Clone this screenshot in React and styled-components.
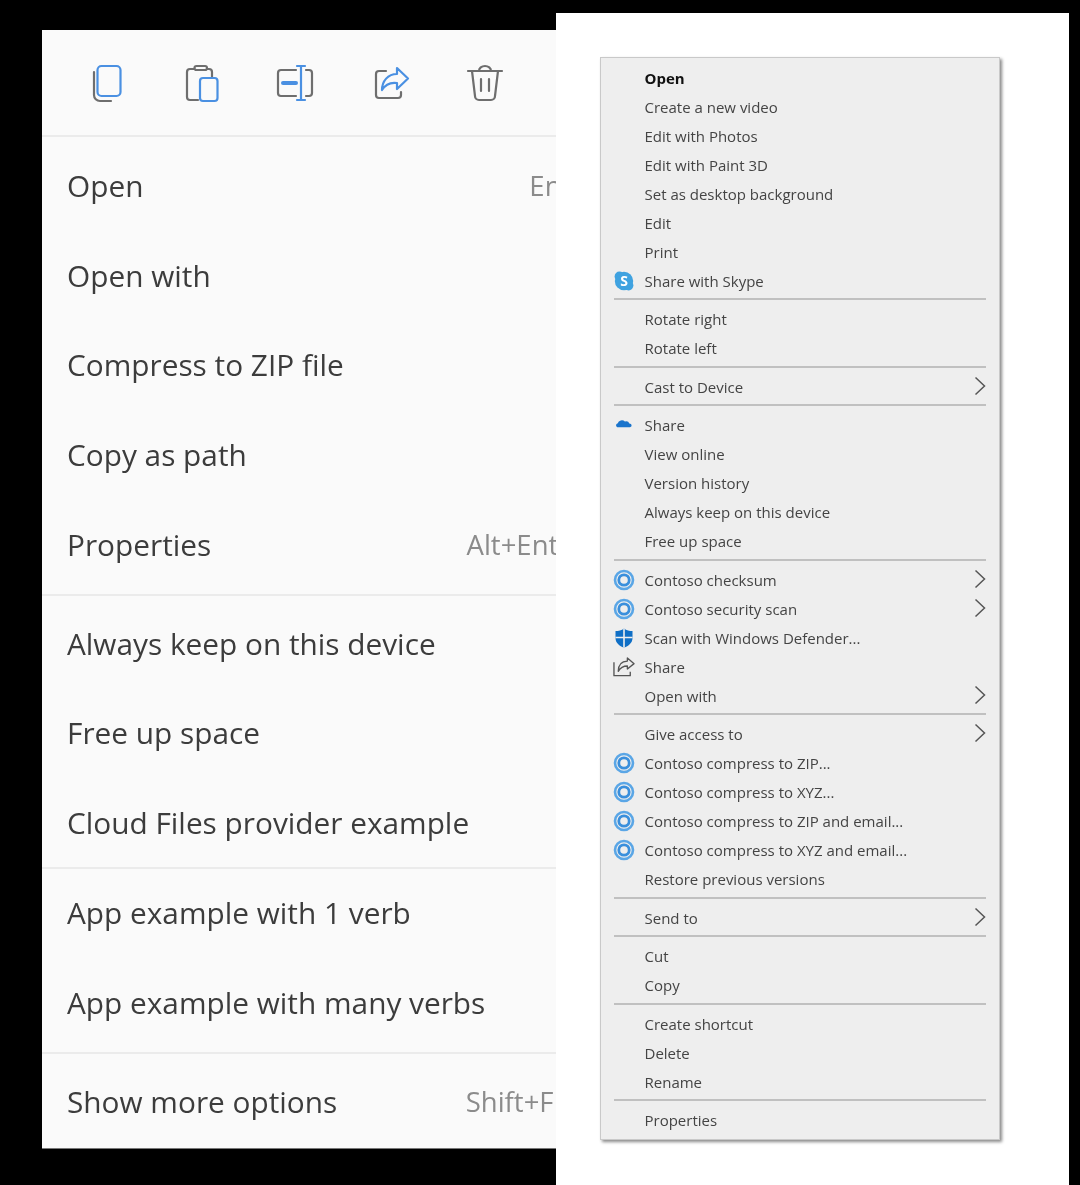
import React from "react";
import styled, { createGlobalStyle } from "styled-components";

const GlobalStyle = createGlobalStyle`
html, body {
	margin: 0;
	height: 100%;
	background: #000;
	overflow: hidden;
}
`;

const Page = styled.div`
display: flex;
align-items: flex-start;
width: 1080px;
height: 1185px;
font-family: "Open Sans", "Noto Sans", sans-serif;
`;

// left half: the new short menu, cut off on its right side
const LeftSide = styled.div`
width: 556px;
box-sizing: border-box;
padding: 30px 0 0 42px;
flex-shrink: 0;
`;

const ShortMenu = styled.div`
width: 514px;
overflow: hidden;
background: #fafafa;
border-bottom: 1px solid #777;
padding-bottom: 7px;
filter: blur(0.5px);
`;

const ShortInner = styled.div`
width: 543px;
`;

const Toolbar = styled.div`
display: flex;
height: 105px;
align-items: center;
padding-left: 18px;
`;

const ToolButton = styled.div`
width: 94.5px;
display: flex;
justify-content: center;
`;

const ShortLine = styled.div`
height: 2px;
background: #ebebeb;
margin: ${(p) => p.$top}px 0 ${(p) => p.$bottom}px;
`;

const ShortRow = styled.div`
display: flex;
align-items: center;
justify-content: space-between;
height: 80px;
padding-left: 25px;
margin-bottom: ${(p) => (p.$last ? 0 : 9.7)}px;
`;

const ShortLabel = styled.span`
font-size: 29.8px;
color: #3c3c3c;
`;

const ShortKey = styled.span`
font-size: 27.5px;
color: #8b8b8b;
margin-right: ${(p) => p.$nudge || 0}px;
`;

// right half: the classic long menu on a white sheet
const Sheet = styled.div`
width: 513px;
height: 1172px;
margin-top: 13px;
background: #fff;
box-sizing: border-box;
padding: 44px 0 0 44px;
flex-shrink: 0;
`;

const LongMenu = styled.div`
width: 400px;
height: 1083px;
box-sizing: border-box;
padding: 5px 13px 0 13px;
background: #eeeeee;
border: 1px solid #c9c9c9;
box-shadow: 2px 2px 3px #8a8a8a;
filter: blur(0.4px);
`;

const LongRow = styled.div`
display: flex;
align-items: center;
height: 29px;
`;

const IconCell = styled.div`
width: 31px;
height: 29px;
display: flex;
align-items: center;
flex-shrink: 0;
margin-left: -1px;
margin-right: 0.5px;
`;

const LongLabel = styled.span`
flex: 1;
font-size: 15px;
color: ${(p) => (p.$bold ? "#111" : "#444")};
font-weight: ${(p) => (p.$bold ? 700 : 400)};
white-space: nowrap;
`;

const Chevron = styled.svg`
width: 12px;
height: 20px;
margin-bottom: 2px;
`;

const LongLine = styled.div`
height: 2px;
background: #c0c0c0;
margin: 3px 0 4.55px;
`;

const BLUE = "#4a90e2";
const GRAY = "#6e6e6e";

const ToolIcon = ({ children }) => (
	<svg width="40" height="40" viewBox="0 0 40 40" fill="none" strokeWidth="2.2" strokeLinecap="round" strokeLinejoin="round">
		{children}
	</svg>
);

const tools = [
	<ToolIcon>
		<path d="M7 9V32a6 6 0 0 0 6 6H24" stroke={GRAY} />
		<rect x="10.5" y="3" width="23" height="30" rx="4" stroke={BLUE} />
	</ToolIcon>,
	<ToolIcon>
		<path d="M12 6H8a3 3 0 0 0-3 3V34a3 3 0 0 0 3 3H16M25 6h2a3 3 0 0 1 3 3v5" stroke={GRAY} />
		<rect x="12.5" y="3" width="12.5" height="4" rx="2" stroke={GRAY} />
		<rect x="18" y="15" width="17.5" height="23" rx="3" stroke={BLUE} />
	</ToolIcon>,
	<ToolIcon>
		<path d="M20 7H5a3 3 0 0 0-3 3V30a3 3 0 0 0 3 3H20M30 7h3a3 3 0 0 1 3 3V30a3 3 0 0 1-3 3H30" stroke={GRAY} />
		<path d="M25 3V37M21 3H29M21 37H29" stroke={BLUE} />
		<path d="M7 20H20" stroke={BLUE} strokeWidth="4" />
	</ToolIcon>,
	<ToolIcon>
		<path d="M15 8H8a3 3 0 0 0-3 3V32a3 3 0 0 0 3 3H27a3 3 0 0 0 3-3V29" stroke={GRAY} />
		<path d="M26 5L37 15.5L26 26V20C19 19 14 22 11 27C11 18 17 11 26 11Z" stroke={BLUE} />
	</ToolIcon>,
	<ToolIcon>
		<path d="M3 8H37M7 8L10 33a4 4 0 0 0 4 4H26a4 4 0 0 0 4-4L33 8M14 8a6 5 0 0 1 12 0M16 16V28M24 16V28" stroke={GRAY} />
	</ToolIcon>,
];

const shortGroups = [
	[["Open", "Enter", -13], ["Open with"], ["Compress to ZIP file"], ["Copy as path"], ["Properties", "Alt+Enter", 0]],
	[["Always keep on this device"], ["Free up space"], ["Cloud Files provider example"]],
	[["App example with 1 verb"], ["App example with many verbs"]],
	[["Show more options", "Shift+F10", 0]],
];

// line gaps worked out from the reference, they differ per group
const shortLineGaps = [
	[0, 8.5],
	[9.5, 7.5],
	[4.5, 3.5],
	[9.5, 7.5],
];

const Skype = () => (
	<svg width="22" height="22" viewBox="0 0 22 22">
		<circle cx="11" cy="11" r="9.2" fill="#3fa2e0" />
		<circle cx="6.4" cy="6.4" r="4.8" fill="#3fa2e0" />
		<circle cx="15.6" cy="15.6" r="4.8" fill="#3fa2e0" />
		<text x="11" y="15.8" textAnchor="middle" fontSize="14" fontWeight="700" fill="#fff" fontFamily="Open Sans, sans-serif">S</text>
	</svg>
);

const Contoso = () => (
	<svg width="22" height="22" viewBox="0 0 22 22" fill="none">
		<circle cx="11" cy="11" r="9" stroke="#5aa6e6" strokeWidth="2.6" />
		<circle cx="11" cy="11" r="5.2" stroke="#3a8fdc" strokeWidth="2.8" />
	</svg>
);

const Cloud = () => (
	<svg width="22" height="22" viewBox="0 0 22 22">
		<path d="M3 15.5a3 3 0 0 1 .6-5.4A5 5 0 0 1 12 7.8a4 4 0 0 1 5.2 2.6A2.6 2.6 0 0 1 18 15.5Z" fill="#1a74cc" transform="translate(1.7 1.6) scale(.85 .75)" />
	</svg>
);

const Shield = () => (
	<svg width="22" height="22" viewBox="0 0 22 22">
		<path d="M11 1.5C8.5 3.4 5.5 4 2.5 4V11c0 5 4 8 8.5 9.8C15.5 19 19.5 16 19.5 11V4C16.5 4 13.5 3.4 11 1.5Z" fill="#0f6fc6" />
		<path d="M11 1.5V20.8M2.5 10.5H19.5" stroke="#eee" strokeWidth="1.6" />
	</svg>
);

const ShareGlyph = () => (
	<svg width="23" height="22" viewBox="0 0 24 22" fill="none" stroke="#555" strokeWidth="1.4" strokeLinejoin="round">
		<path d="M1 6V20H18V16" />
		<path d="M15 1.5L22 7.5L15 13V10C10 10 7.5 12 5.5 15.5C5.5 9 9 5 15 4.8Z" />
	</svg>
);

const glyphs = { skype: <Skype />, contoso: <Contoso />, cloud: <Cloud />, shield: <Shield />, share: <ShareGlyph /> };

const longGroups = [
	[
		{ name: "Open", bold: true },
		{ name: "Create a new video" },
		{ name: "Edit with Photos" },
		{ name: "Edit with Paint 3D" },
		{ name: "Set as desktop background" },
		{ name: "Edit" },
		{ name: "Print" },
		{ name: "Share with Skype", icon: "skype" },
	],
	[{ name: "Rotate right" }, { name: "Rotate left" }],
	[{ name: "Cast to Device", more: true }],
	[
		{ name: "Share", icon: "cloud" },
		{ name: "View online" },
		{ name: "Version history" },
		{ name: "Always keep on this device" },
		{ name: "Free up space" },
	],
	[
		{ name: "Contoso checksum", icon: "contoso", more: true },
		{ name: "Contoso security scan", icon: "contoso", more: true },
		{ name: "Scan with Windows Defender...", icon: "shield" },
		{ name: "Share", icon: "share" },
		{ name: "Open with", more: true },
	],
	[
		{ name: "Give access to", more: true },
		{ name: "Contoso compress to ZIP...", icon: "contoso" },
		{ name: "Contoso compress to XYZ...", icon: "contoso" },
		{ name: "Contoso compress to ZIP and email...", icon: "contoso" },
		{ name: "Contoso compress to XYZ and email...", icon: "contoso" },
		{ name: "Restore previous versions" },
	],
	[{ name: "Send to", more: true }],
	[{ name: "Cut" }, { name: "Copy" }],
	[{ name: "Create shortcut" }, { name: "Delete" }, { name: "Rename" }],
	[{ name: "Properties" }],
];

const App = () => {
	return (
		<Page>
			<GlobalStyle />
			<LeftSide>
				<ShortMenu>
					<ShortInner>
						<Toolbar>
							{tools.map((icon, i) => (
								<ToolButton key={i}>{icon}</ToolButton>
							))}
						</Toolbar>
						{shortGroups.map((group, g) => (
							<div key={g}>
								<ShortLine $top={shortLineGaps[g][0]} $bottom={shortLineGaps[g][1]} />
								{group.map(([label, key, nudge], r) => (
									<ShortRow key={label} $last={r === group.length - 1}>
										<ShortLabel>{label}</ShortLabel>
										{key && <ShortKey $nudge={nudge}>{key}</ShortKey>}
									</ShortRow>
								))}
							</div>
						))}
					</ShortInner>
				</ShortMenu>
			</LeftSide>
			<Sheet>
				<LongMenu>
					{longGroups.map((group, g) => (
						<div key={g}>
							{g > 0 && <LongLine />}
							{group.map((item, r) => (
								<LongRow key={r}>
									<IconCell>{item.icon && glyphs[item.icon]}</IconCell>
									<LongLabel $bold={item.bold}>{item.name}</LongLabel>
									{item.more && (
										<Chevron viewBox="0 0 12 20" fill="none" stroke="#555" strokeWidth="1.5">
											<path d="M1.5 1.5L10.5 10L1.5 18.5" />
										</Chevron>
									)}
								</LongRow>
							))}
						</div>
					))}
				</LongMenu>
			</Sheet>
		</Page>
	);
};

export default App;
